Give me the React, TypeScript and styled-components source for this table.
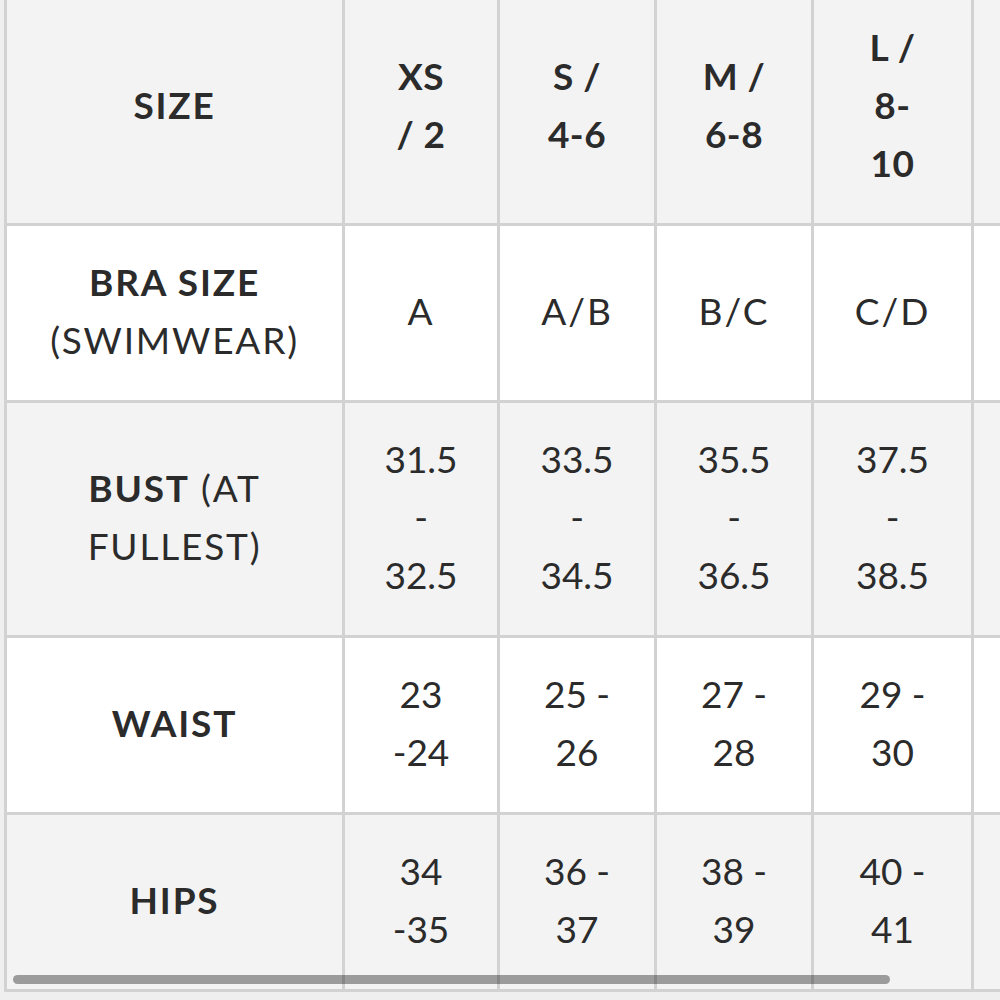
import React from "react";
import styled, { createGlobalStyle } from "styled-components";

const GlobalStyle = createGlobalStyle`
  html, body {
    margin: 0;
    padding: 0;
    background: #efefef;
  }
  * { box-sizing: border-box; }
`;

const Viewport = styled.div`
  width: 1000px;
  height: 1000px;
  overflow: hidden;
  position: relative;
  background: #efefef;
  padding-left: 4px;
`;

const Table = styled.div`
  display: grid;
  grid-template-columns: 338px 155px 157px 157px 160px 160px;
  width: max-content;
  margin-top: -12px;
  border-left: 3px solid #d2d2d2;
  border-top: 3px solid #d2d2d2;
  font-family: Lato, "Liberation Sans", sans-serif;
  color: #2b2b2b;
`;

const Cell = styled.div<{ $shade: boolean; $bold?: boolean; $spacing?: number }>`
  display: flex;
  align-items: center;
  justify-content: center;
  text-align: center;
  padding: 27px 8px 31px;
  border-right: 3px solid #d2d2d2;
  border-bottom: 3px solid #d2d2d2;
  background: ${(p) => (p.$shade ? "#f3f3f3" : "#ffffff")};
  font-size: 37px;
  line-height: 58px;
  font-weight: ${(p) => (p.$bold ? 700 : 400)};
  letter-spacing: ${(p) => p.$spacing ?? 0}px;
  white-space: nowrap;
`;

const Strong = styled.span`
  font-weight: 700;
`;

const ScrollThumb = styled.div`
  position: absolute;
  left: 13px;
  top: 975px;
  width: 877px;
  height: 9px;
  border-radius: 5px;
  background: rgba(0, 0, 0, 0.36);
`;

type Row = {
  label: React.ReactNode;
  values: string[][];
  bold?: boolean;
  valueSpacing?: number;
};

const rows: Row[] = [
  {
    label: "SIZE",
    values: [["XS", "/ 2"], ["S /", "4-6"], ["M /", "6-8"], ["L /", "8-", "10"], []],
    bold: true,
    valueSpacing: 0.5,
  },
  {
    label: (
      <>
        <Strong>BRA SIZE</Strong>
        <br />
        (SWIMWEAR)
      </>
    ),
    values: [["A"], ["A/B"], ["B/C"], ["C/D"], []],
    valueSpacing: 2,
  },
  {
    label: (
      <>
        <Strong>BUST</Strong> (AT
        <br />
        FULLEST)
      </>
    ),
    values: [
      ["31.5", "-", "32.5"],
      ["33.5", "-", "34.5"],
      ["35.5", "-", "36.5"],
      ["37.5", "-", "38.5"],
      [],
    ],
  },
  {
    label: <Strong>WAIST</Strong>,
    values: [["23", "-24"], ["25 -", "26"], ["27 -", "28"], ["29 -", "30"], []],
  },
  {
    label: <Strong>HIPS</Strong>,
    values: [["34", "-35"], ["36 -", "37"], ["38 -", "39"], ["40 -", "41"], []],
  },
];

const Lines: React.FC<{ lines: string[] }> = ({ lines }) => (
  <span>
    {lines.map((l, i) => (
      <React.Fragment key={i}>
        {i > 0 && <br />}
        {l}
      </React.Fragment>
    ))}
  </span>
);

export default function App() {
  return (
    <>
      <GlobalStyle />
      <Viewport>
        <Table>
          {rows.map((row, r) => {
            const shade = r % 2 === 0;
            return (
              <React.Fragment key={r}>
                <Cell $shade={shade} $bold={row.bold} $spacing={1.8}>
                  <span>{row.label}</span>
                </Cell>
                {row.values.map((v, c) => (
                  <Cell key={c} $shade={shade} $bold={row.bold} $spacing={row.valueSpacing}>
                    <Lines lines={v} />
                  </Cell>
                ))}
              </React.Fragment>
            );
          })}
        </Table>
        <ScrollThumb />
      </Viewport>
    </>
  );
}
